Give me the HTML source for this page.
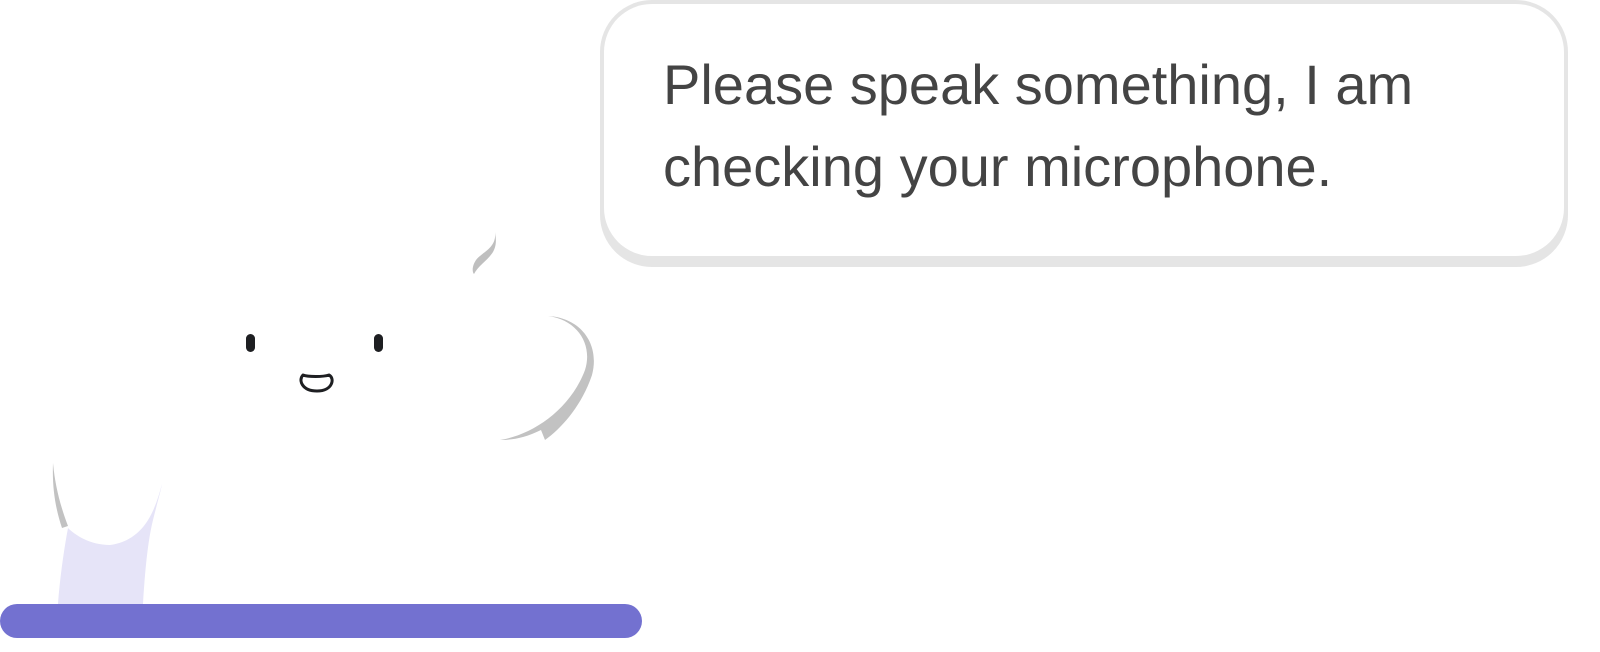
<!DOCTYPE html>
<html><head><meta charset="utf-8"><style>
html,body{margin:0;padding:0;background:#fff;width:1600px;height:652px;overflow:hidden;position:relative}
.bo{position:absolute;left:600px;top:0;width:968px;height:267px;background:#e5e5e5;border-radius:52px}
.bi{position:absolute;left:604px;top:4px;width:960px;height:252px;background:#fff;border-radius:48px}
.t{position:absolute;left:663px;top:44px;font-family:"Liberation Sans",sans-serif;font-size:56px;line-height:82px;color:#444;white-space:nowrap}
.bar{position:absolute;left:0;top:604px;width:642px;height:34px;background:#7371d0;border-radius:17px}
svg{position:absolute;left:0;top:0}
</style></head><body>
<div class="bo"></div><div class="bi"></div>
<div class="t">Please speak something, I am<br>checking your microphone.</div>
<svg width="1600" height="652">
<path d="M495,232 C497,248 482,252 476,260 C472,266 472,272 474,274 C478,266 488,260 493,252 C497,245 496,238 495,232Z" fill="#bfbfbf"/>
<path d="M548,316 C582,318 600,345 592,375 C582,405 562,428 545,440 L541,430 C525,438 512,440 500,440 C532,435 570,410 585,370 C593,345 578,320 548,316Z" fill="#c2c2c2"/>
<path d="M53,463 C52,490 56,510 62,528 L68,526 C60,505 55,485 53,463Z" fill="#c2c2c2"/>
<path d="M68,528 C62,560 59,590 58,604 L143,604 C145,570 148,540 153,520 C158,500 161,490 162,484 C155,510 145,540 110,545 C90,545 75,535 68,528Z" fill="#e6e4f8"/>
<rect x="246" y="334" width="9" height="18" rx="4.5" fill="#1e1f22"/>
<rect x="374" y="334" width="9" height="18" rx="4.5" fill="#1e1f22"/>
<path d="M303,375 C308,377 323,377 329,375 C335,378 333,391 317,391 C302,391 298,380 303,375Z" fill="none" stroke="#1e1f22" stroke-width="3" stroke-linejoin="round"/>
</svg>
<div class="bar"></div>
</body></html>
